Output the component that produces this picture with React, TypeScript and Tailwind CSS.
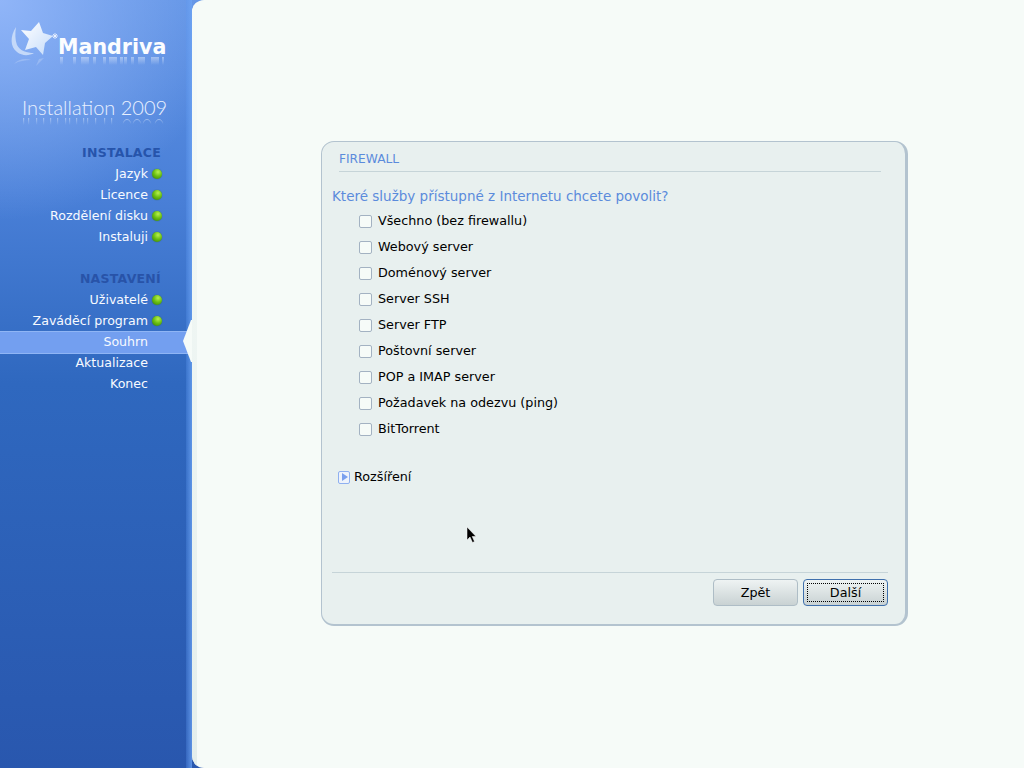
const font = { fontFamily: '"DejaVu Sans", sans-serif' };

const services = [
  "Všechno (bez firewallu)",
  "Webový server",
  "Doménový server",
  "Server SSH",
  "Server FTP",
  "Poštovní server",
  "POP a IMAP server",
  "Požadavek na odezvu (ping)",
  "BitTorrent",
];

const mandrivaStems: [number, number][] = [
  [60, 3], [73, 3], [81, 8], [93, 3], [103, 3], [109, 8], [120, 3], [124, 3], [131, 3], [138, 7], [151, 8], [162, 2],
];
const installStems = [23, 28, 36, 43, 50, 57, 65, 69, 76, 83, 87, 95, 104, 111];

function Dot() {
  return (
    <span className="mb-[1px] -ml-[1px] mr-[1px] h-[10px] w-[10px] rounded-full shadow-[0_0_1px_#2d5a22] bg-[radial-gradient(circle_at_60%_30%,#b8f050_0%,#6cc012_45%,#2f7a08_100%)]" />
  );
}

function Step({ label, done, active }: { label: string; done?: boolean; active?: boolean }) {
  return (
    <div
      className={
        "flex h-[21px] items-center justify-end pr-[23px] " +
        (active
          ? "relative -my-px -mr-[6px] h-[23px] border-y border-[#8fb5f5] bg-[#739ff0] pr-[29px]"
          : "")
      }
    >
      <span className={"text-[12.6px] text-[#f7faff] " + (done ? "mr-[5px]" : "mr-[15px]")}>{label}</span>
      {done && <Dot />}
    </div>
  );
}

function Logo() {
  return (
    <div className="relative h-[90px]">
      <svg width="160" height="110" viewBox="8 18 160 110" className="absolute left-[8px] top-[18px]">
        <defs>
          <linearGradient id="star" x1="0" y1="0" x2="1" y2="1">
            <stop offset="0" stopColor="#ffffff" />
            <stop offset="1" stopColor="#c4dbfa" />
          </linearGradient>
          <linearGradient id="fade" x1="0" y1="0" x2="0" y2="1">
            <stop offset="0" stopColor="#ffffff" stopOpacity="0.4" />
            <stop offset="1" stopColor="#ffffff" stopOpacity="0" />
          </linearGradient>
        </defs>
        <path d="M16 27 C10 36 10 47 17 52 C22 56 29 56 34 53 C27 53 20 51 17 45 C15 40 15 33 16 27Z" fill="#dbe8fb" opacity="0.75" />
        <path d="M39 22 L43 33 L53 36 L45 43 L43 55 L36 47 L25 50 L29 39 L21 30 L31 31 Z" fill="url(#star)" />
        <path d="M52 36 l6 0 M55 33 l0 6 M53 34 l4 4 M57 34 l-4 4" stroke="#f4f8ff" strokeWidth="0.8" />
        <path d="M14 64 C18 59 26 58 31 60 C25 60 19 61 14 64Z M36 66 L39 59 L44 58 L40 62Z" fill="#ffffff" opacity="0.2" />
        {mandrivaStems.map(([x, w]) => (
          <rect key={x} x={x} y={57} width={w} height={8} fill="url(#fade)" />
        ))}
        {installStems.map((x) => (
          <rect key={x} x={x} y={118} width={1.2} height={7} fill="url(#fade)" />
        ))}
        {[127, 137, 147, 159].map((cx) => (
          <path key={cx} d={`M${cx - 4} 124 C${cx - 3} 118 ${cx + 3} 118 ${cx + 4} 124`} fill="none" stroke="url(#fade)" strokeWidth="1" />
        ))}
      </svg>
      <span className="absolute left-[58px] top-[34px] text-[20.6px] leading-[26px] font-bold text-[#fbfdff]">
        Mandriva
      </span>
    </div>
  );
}

function Cursor() {
  return (
    <svg width="12" height="18" viewBox="0 0 12 18" className="absolute left-[466px] top-[526px]">
      <path d="M1 1 L1 14 L4 11 L6.5 16.5 L8.5 15.5 L6.2 10.5 L10 10.5 Z" fill="#000" stroke="#fff" strokeWidth="0.5" />
    </svg>
  );
}

export default function App() {
  return (
    <div
      className="relative flex h-[768px] w-[1024px] overflow-hidden bg-[radial-gradient(ellipse_230px_220px_at_0_0,#90b5f8,transparent),linear-gradient(#5f92e4_0%,#4a80d8_25%,#2f68bf_50%,#2957ae_100%)]"
      style={font}
    >
      <aside className="relative w-[192px] shrink-0 border-r-[6px] border-transparent">
        <div className="absolute bottom-0 right-[-6px] top-0 w-[6px] bg-[linear-gradient(90deg,rgba(90,150,240,0.25),rgba(110,165,245,0.75))]" />
        <Logo />
        <div className="relative h-[48px] pl-[22px] pt-[4px] text-[20px] leading-[26px] font-light text-[#e9f1ff]" style={{ fontFamily: 'Lato, sans-serif' }}>
          Installation 2009
        </div>
        <div className="mt-[5px] flex h-[21px] items-center justify-end pr-[25px] text-[12.5px] font-bold tracking-[0.25px] text-[#2654ab]">
          INSTALACE
        </div>
        <div>
          <Step label="Jazyk" done />
          <Step label="Licence" done />
          <Step label="Rozdělení disku" done />
          <Step label="Instaluji" done />
        </div>
        <div className="mt-[21px] flex h-[21px] items-center justify-end pr-[25px] text-[12.5px] font-bold tracking-[0.25px] text-[#2853a8]">
          NASTAVENÍ
        </div>
        <div>
          <Step label="Uživatelé" done />
          <Step label="Zaváděcí program" done />
          <Step label="Souhrn" active />
          <Step label="Aktualizace" />
          <Step label="Konec" />
        </div>
        <svg width="10" height="42" viewBox="0 0 10 42" className="absolute right-[-6px] top-[320px]">
          <path d="M9 0 L1 21 L9 42 L10 42 L10 0 Z" fill="#f6fbf8" />
        </svg>
      </aside>

      <main className="flex flex-1 overflow-hidden rounded-l-[12px] bg-[#f6fbf8]">
        <div className="h-full w-[5px] shrink-0 bg-[linear-gradient(#f6fbf8,#e4eeec)]" />
        <div className="pl-[124px] pt-[141px]">
          <section className="flex h-[485px] w-[587px] flex-col rounded-[13px] border border-b-2 border-r-[3px] border-[#b3c3cf] bg-[#e8f0ef] pl-[10px] pr-[17px]">
            <div className="ml-[7px] mr-[7px] flex h-[30px] items-end border-b border-[#c6d4d8] pb-[4px] text-[12.2px] leading-[16px] text-[#5b8bdc]">
              FIREWALL
            </div>
            <h1 className="mt-[14px] h-[20px] text-[13.5px] leading-[20px] font-normal text-[#5b8bdc]">
              Které služby přístupné z Internetu chcete povolit?
            </h1>
            <div className="mt-[2px] flex flex-col pl-[27px]">
              {services.map((s) => (
                <label key={s} className="flex h-[26px] items-center gap-[6px] text-[12.75px] text-black">
                  <span className="h-[13px] w-[13px] rounded-[2px] border border-[#a3b2c2] bg-[#f6fbf8]" />
                  {s}
                </label>
              ))}
            </div>
            <div className="ml-[6px] mt-[22px] flex h-[26px] items-center gap-[4px] text-[12.75px] text-black">
              <span className="flex h-[13px] w-[12px] items-center justify-center rounded-[2px] border border-[#8fb0f0] bg-[#eef3fb] pl-[1px]">
                <span className="h-0 w-0 border-y-[4.5px] border-l-[6px] border-y-transparent border-l-[#7aa0ee]" />
              </span>
              Rozšíření
            </div>
            <div className="mt-[82px] border-t border-[#c6d4d8]" />
            <div className="mt-[6px] flex justify-end gap-[5px]">
              <button className="h-[27px] w-[85px] rounded-[4px] border border-[#aebdc6] bg-[linear-gradient(#eef3f3,#c9d2d3)] text-[12.75px] text-black">
                Zpět
              </button>
              <button className="flex h-[27px] w-[85px] items-center justify-center rounded-[4px] border border-[#3f70ad] bg-[linear-gradient(#eef3f3,#c9d2d3)] p-[3px] text-[12.75px] text-black">
                <span className="flex h-full w-full items-center justify-center border border-dotted border-black">Další</span>
              </button>
            </div>
          </section>
        </div>
      </main>
      <Cursor />
    </div>
  );
}
